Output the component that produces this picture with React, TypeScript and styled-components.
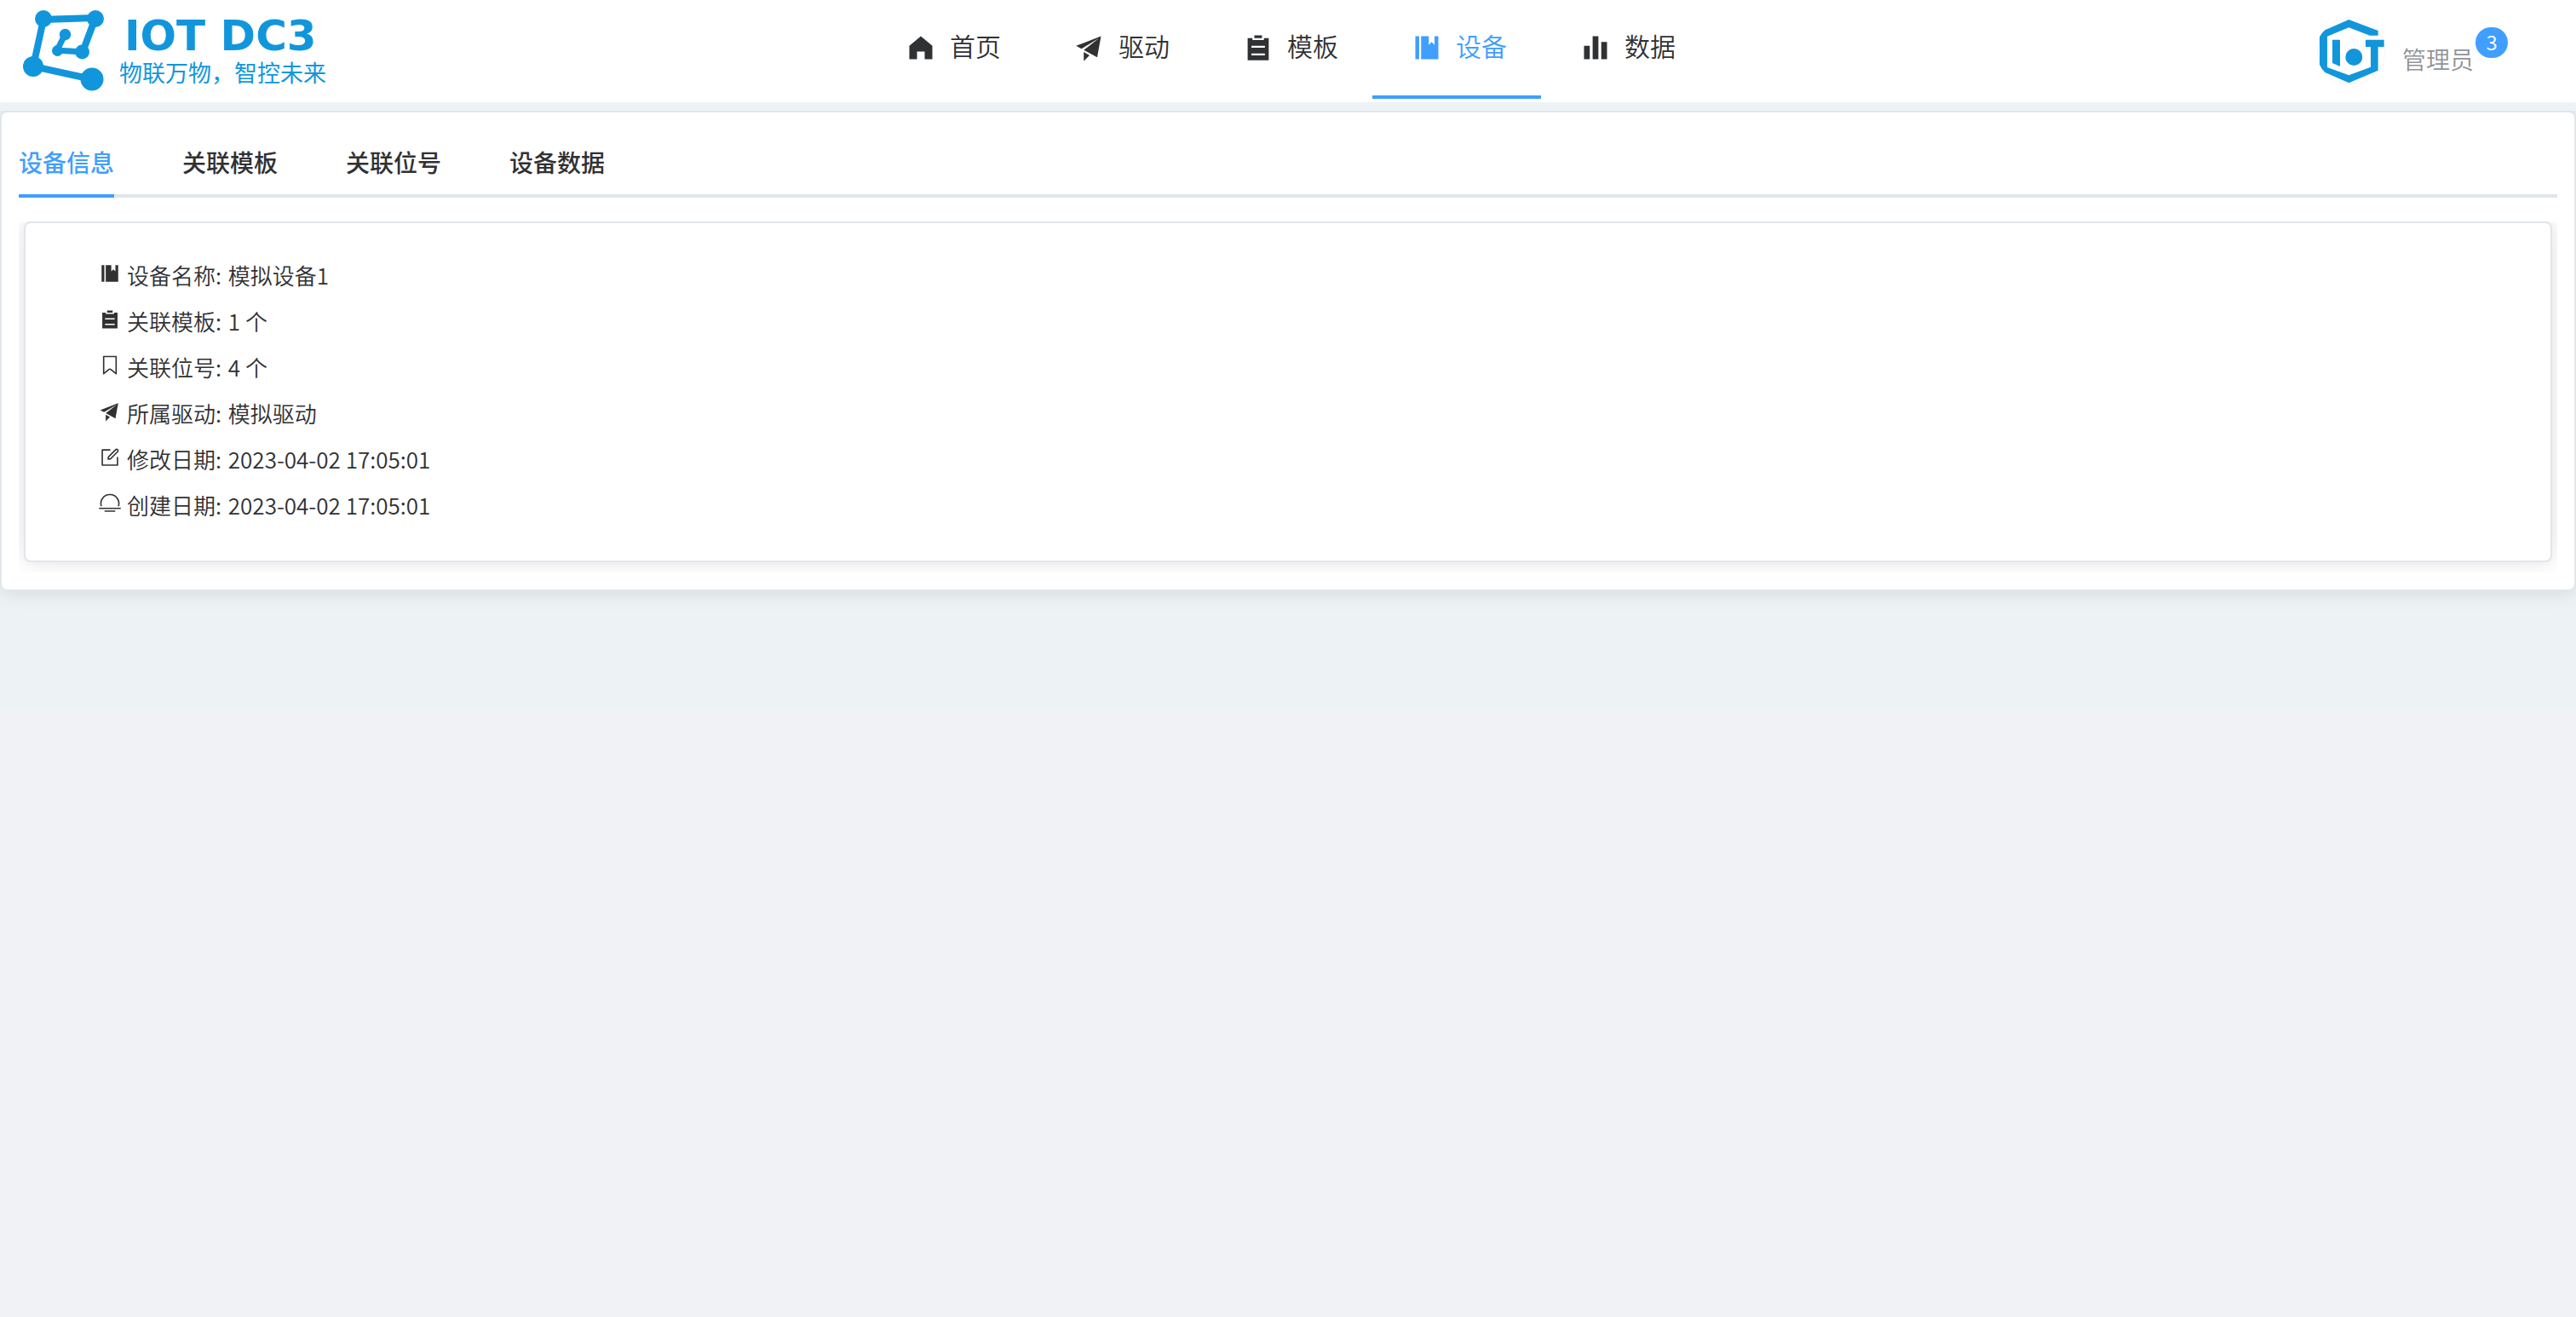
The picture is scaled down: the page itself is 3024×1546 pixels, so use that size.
import React, { useState } from "react";
import styled, { createGlobalStyle } from "styled-components";

const colors = {
  primary: "#409eff",
  brand: "#1296db",
  text: "#303133",
  muted: "#909399",
  border: "#e1e6eb",
};

const GlobalStyle = createGlobalStyle`
  *, *::before, *::after { box-sizing: border-box; }
  body {
    margin: 0;
    background: #f0f2f6;
    color: ${colors.text};
    font-family: "Noto Sans CJK SC", sans-serif;
    font-weight: 350;
  }
  button { font: inherit; color: inherit; background: none; border: 0; padding: 0; cursor: pointer; }
  ul, dl, dd { margin: 0; padding: 0; list-style: none; }
`;

const Header = styled.header`
  display: grid;
  grid-template-columns: 1fr auto 1fr;
  height: 120px;
  background: #fff;
`;

const Brand = styled.a`
  display: flex;
  align-items: flex-start;
  gap: 17px;
  padding: 10px 0 0 26px;
  color: ${colors.brand};
  text-decoration: none;
`;

const BrandMark = styled.svg`
  width: 97px;
  height: 98px;
  flex: none;
`;

const BrandText = styled.span`
  display: flex;
  flex-direction: column;
`;

const BrandName = styled.span`
  padding-left: 6px;
  font-family: "DejaVu Sans", sans-serif;
  font-size: 50px;
  font-weight: 700;
  line-height: 64px;
  white-space: nowrap;
`;

const Slogan = styled.span`
  font-size: 27px;
  font-weight: 400;
  line-height: 22px;
  white-space: nowrap;
`;

const Nav = styled.nav`
  display: flex;
  height: 116px;
`;

const NavItem = styled.a<{ $active: boolean }>`
  display: flex;
  align-items: center;
  gap: 10px;
  padding: 0 40px;
  border-bottom: 4px solid ${(p) => (p.$active ? colors.primary : "transparent")};
  color: ${(p) => (p.$active ? colors.primary : colors.text)};
  font-size: 30px;
  line-height: 40px;
  text-decoration: none;
`;

const NavIcon = styled.span`
  display: flex;
  justify-content: center;
  width: 48px;
`;

const NavLabel = styled.span`
  padding-bottom: 6px;
`;

const Glyph = styled.svg<{ $size: number }>`
  display: block;
  flex: none;
  width: ${(p) => p.$size}px;
  height: ${(p) => p.$size}px;
  fill: currentColor;
`;

const UserArea = styled.div`
  display: flex;
  justify-content: flex-end;
  padding: 20px 80px 0 0;
`;

const UserButton = styled.button`
  display: flex;
  align-items: flex-start;
  height: 80px;
`;

const Avatar = styled.svg`
  width: 80px;
  height: 80px;
`;

const UserName = styled.span`
  padding: 29px 2px 0 20px;
  color: ${colors.muted};
  font-size: 28px;
  line-height: 40px;
`;

const Badge = styled.span`
  margin-top: 12px;
  min-width: 38px;
  height: 36px;
  border-radius: 18px;
  background: ${colors.primary};
  color: #fff;
  font-size: 24px;
  line-height: 34px;
  text-align: center;
`;

const Main = styled.main`
  padding: 10px 0 136px;
  background: #edf2f5;
`;

const Card = styled.section`
  border: 2px solid ${colors.border};
  border-radius: 8px;
  background: #fff;
  box-shadow: 0 0 24px rgba(0, 0, 0, 0.12);
`;

const Page = styled(Card)`
  padding: 20px;
  clip-path: inset(0 0 -32px);
`;

const TabList = styled.div`
  display: flex;
  gap: 80px;
  height: 80px;
  box-shadow: inset 0 -4px 0 ${colors.border};
`;

const Tab = styled.button<{ $active: boolean }>`
  border-bottom: 4px solid ${(p) => (p.$active ? colors.primary : "transparent")};
  color: ${(p) => (p.$active ? colors.primary : colors.text)};
  font-size: 28px;
  font-weight: 500;
  line-height: 76px;
`;

const TabPanel = styled.div`
  margin-top: 28px;
  padding: 0 6px 12px;
  overflow: hidden;
`;

const InfoList = styled.dl`
  padding: 36px 86px;
`;

const InfoRow = styled.div`
  display: flex;
  align-items: center;
  height: 54px;
  padding-bottom: 4px;
  font-size: 26px;
  line-height: 50px;
`;

const InfoIcon = styled.span`
  padding: 0 7px 4px 0;
`;

const InfoLabel = styled.dt`
  padding-right: 2px;
  white-space: pre;
`;

const InfoValue = styled.dd`
  white-space: nowrap;
`;

const icons = {
  home: "M512 128 128 447.936V896h255.936V640H640v256h255.936V447.936z",
  promotion:
    "m64 448 832-320-128 704-446.08-243.328L832 192 242.816 545.536 64 448zm256 512V657.024L512 768 320 960z",
  list: "M704 192h160v736H160V192h160v64h384v-64zM288 512h448v-64H288v64zm0 256h448v-64H288v64zm96-576V96h256v96H384z",
  management:
    "M576 128v288l96-96 96 96V128h128v768H320V128h256zm-448 0h128v768H128V128z",
  histogram:
    "M416 896V128h192v768H416zm-288 0V448h192v448H128zm576 0V320h192v576H704z",
  tag: "M256 128v698.88l196.032-156.864a96 96 0 0 1 119.936 0L768 826.88V128H256zm-32-64h576a32 32 0 0 1 32 32v797.44a32 32 0 0 1-51.968 24.96L531.968 720a32 32 0 0 0-39.936 0L243.968 918.4A32 32 0 0 1 192 893.44V96a32 32 0 0 1 32-32z",
  edit: "M832 512a32 32 0 1 1 64 0v352a32 32 0 0 1-32 32H160a32 32 0 0 1-32-32V160a32 32 0 0 1 32-32h352a32 32 0 0 1 0 64H192v640h640V512z m-362.048 42.24 52.8-7.552L847.104 222.4a32 32 0 1 0-45.248-45.248L477.44 501.44l-7.552 52.8zm422.4-422.4a96 96 0 0 1 0 135.808l-331.84 331.84a32 32 0 0 1-18.112 9.088L436.8 623.68a32 32 0 0 1-36.224-36.224l15.104-105.6a32 32 0 0 1 9.024-18.112l331.904-331.84a96 96 0 0 1 135.744 0z",
  sunset:
    "M82.56 640a448 448 0 1 1 858.88 0h-67.2a384 384 0 1 0-724.288 0H82.56zM32 704h960q32 0 32 32t-32 32H32q-32 0-32-32t32-32zm256 128h448q32 0 32 32t-32 32H288q-32 0-32-32t32-32z",
};

type IconName = keyof typeof icons;

const Icon = ({ name, size }: { name: IconName; size: number }) => (
  <Glyph $size={size} viewBox="0 0 1024 1024" aria-hidden="true">
    <path d={icons[name]} />
  </Glyph>
);

const navItems: { label: string; icon: IconName }[] = [
  { label: "首页", icon: "home" },
  { label: "驱动", icon: "promotion" },
  { label: "模板", icon: "list" },
  { label: "设备", icon: "management" },
  { label: "数据", icon: "histogram" },
];

const tabs = ["设备信息", "关联模板", "关联位号", "设备数据"];

const info: { icon: IconName; label: string; value: string }[] = [
  { icon: "management", label: "设备名称", value: "模拟设备1" },
  { icon: "list", label: "关联模板", value: "1 个" },
  { icon: "tag", label: "关联位号", value: "4 个" },
  { icon: "promotion", label: "所属驱动", value: "模拟驱动" },
  { icon: "edit", label: "修改日期", value: "2023-04-02 17:05:01" },
  { icon: "sunset", label: "创建日期", value: "2023-04-02 17:05:01" },
];

const LogoMark = () => (
  <BrandMark viewBox="26 10 97 98" aria-hidden="true">
    <g fill="none" stroke="currentColor" strokeWidth="8">
      <path d="M108 93 39 78 51 23 112 21 97 61" />
      <path d="M97 61 67 59 76 41" strokeWidth="7" />
    </g>
    <g fill="currentColor">
      <circle cx="51" cy="22" r="10" />
      <circle cx="112" cy="22" r="10" />
      <circle cx="39" cy="78" r="12" />
      <circle cx="108" cy="93" r="13.5" />
      <circle cx="76.5" cy="40.5" r="6.7" />
      <circle cx="67.5" cy="59.5" r="6.5" />
      <circle cx="96.5" cy="61" r="8.5" />
    </g>
  </BrandMark>
);

const UserAvatar = () => (
  <Avatar viewBox="60 60 240 240" aria-hidden="true">
    <circle cx="180" cy="180" r="118.5" fill="#fff" stroke="#eef0f2" strokeWidth="2" />
    <g fill={colors.brand}>
      <path d="M172 69 275 108V125H246L172 97 96 128V237L172 265 249 236V165H231V140H296V165H275V248L172 292 88 255Q76 243 69 228V130Q76 116 88 106Z" />
      <path d="M114 140h27v94l-27-12z" />
      <circle cx="190" cy="201" r="30" />
    </g>
  </Avatar>
);

export default function App() {
  const [tab, setTab] = useState(tabs[0]);

  return (
    <>
      <GlobalStyle />
      <Header>
        <Brand href="#home">
          <LogoMark />
          <BrandText>
            <BrandName>IOT DC3</BrandName>
            <Slogan>物联万物，智控未来</Slogan>
          </BrandText>
        </Brand>
        <Nav>
          {navItems.map((item) => (
            <NavItem key={item.label} href="#" $active={item.label === "设备"}>
              <NavIcon>
                <Icon name={item.icon} size={36} />
              </NavIcon>
              <NavLabel>{item.label}</NavLabel>
            </NavItem>
          ))}
        </Nav>
        <UserArea>
          <UserButton type="button">
            <UserAvatar />
            <UserName>管理员</UserName>
            <Badge>3</Badge>
          </UserButton>
        </UserArea>
      </Header>
      <Main>
        <Page>
          <TabList role="tablist">
            {tabs.map((name) => (
              <Tab
                key={name}
                type="button"
                role="tab"
                aria-selected={name === tab}
                $active={name === tab}
                onClick={() => setTab(name)}
              >
                {name}
              </Tab>
            ))}
          </TabList>
          <TabPanel role="tabpanel">
            <Card>
              <InfoList>
                {info.map((row) => (
                  <InfoRow key={row.label}>
                    <InfoIcon>
                      <Icon name={row.icon} size={26} />
                    </InfoIcon>
                    <InfoLabel>{row.label}: </InfoLabel>
                    <InfoValue>{row.value}</InfoValue>
                  </InfoRow>
                ))}
              </InfoList>
            </Card>
          </TabPanel>
        </Page>
      </Main>
    </>
  );
}
